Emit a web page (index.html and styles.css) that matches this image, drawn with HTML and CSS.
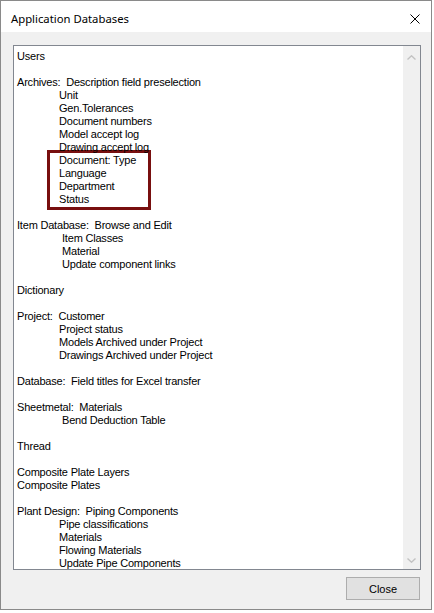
FILE: index.html
```html
<!DOCTYPE html>
<html lang="en">
<head>
    <meta charset="UTF-8">
    <title>Application Databases</title>
    <link rel="stylesheet" href="styles.css">
</head>
<body>
    <div class="window">
        <!-- Title bar -->
        <div class="titlebar">
            <span class="title">Application Databases</span>
            <svg class="close-x" width="10" height="10" viewBox="0 0 10 10">
                <path d="M0.5 0.5 L9.5 9.5 M9.5 0.5 L0.5 9.5" stroke="#000" stroke-width="1" fill="none"/>
            </svg>
        </div>

        <!-- Dialog body -->
        <div class="dialog-body">
            <div class="listbox">
                <div class="lines">
                    <div class="line">Users</div>
                    <div class="line"></div>
                    <div class="line">Archives:&nbsp; Description field preselection</div>
                    <div class="line sub">Unit</div>
                    <div class="line sub">Gen.Tolerances</div>
                    <div class="line sub">Document numbers</div>
                    <div class="line sub">Model accept log</div>
                    <div class="line sub">Drawing accept log</div>
                    <div class="highlight">
                        <div class="line">Document: Type</div>
                        <div class="line">Language</div>
                        <div class="line">Department</div>
                        <div class="line">Status</div>
                    </div>
                    <div class="line"></div>
                    <div class="line">Item Database:&nbsp; Browse and Edit</div>
                    <div class="line sub2">Item Classes</div>
                    <div class="line sub2">Material</div>
                    <div class="line sub2">Update component links</div>
                    <div class="line"></div>
                    <div class="line">Dictionary</div>
                    <div class="line"></div>
                    <div class="line">Project:&nbsp; Customer</div>
                    <div class="line sub">Project status</div>
                    <div class="line sub">Models Archived under Project</div>
                    <div class="line sub">Drawings Archived under Project</div>
                    <div class="line"></div>
                    <div class="line">Database:&nbsp; Field titles for Excel transfer</div>
                    <div class="line"></div>
                    <div class="line">Sheetmetal:&nbsp; Materials</div>
                    <div class="line sub2">Bend Deduction Table</div>
                    <div class="line"></div>
                    <div class="line">Thread</div>
                    <div class="line"></div>
                    <div class="line">Composite Plate Layers</div>
                    <div class="line">Composite Plates</div>
                    <div class="line"></div>
                    <div class="line">Plant Design:&nbsp; Piping Components</div>
                    <div class="line sub">Pipe classifications</div>
                    <div class="line sub">Materials</div>
                    <div class="line sub">Flowing Materials</div>
                    <div class="line sub">Update Pipe Components</div>
                </div>
                <!-- Scrollbar (disabled) -->
                <div class="scrollbar">
                    <svg width="9" height="5" viewBox="0 0 9 5">
                        <path d="M0.5 4.5 L4.5 0.8 L8.5 4.5" stroke="#c2c2c2" stroke-width="1.4" fill="none"/>
                    </svg>
                    <svg width="9" height="5" viewBox="0 0 9 5">
                        <path d="M0.5 0.5 L4.5 4.2 L8.5 0.5" stroke="#c2c2c2" stroke-width="1.4" fill="none"/>
                    </svg>
                </div>
            </div>
            <div class="buttons">
                <button class="btn">Close</button>
            </div>
        </div>
    </div>
</body>
</html>
```

FILE: styles.css
```css
body {
    margin: 0;
    padding: 0;
    background-color: #ffffff;
    font-family: "Liberation Sans", Arial, sans-serif;
}

/* Dialog frame */
.window {
    width: 432px;
    height: 610px;
    box-sizing: border-box;
    border: 1px solid #8a8a8a;
    background-color: #f0f0f0;
    display: flex;
    flex-direction: column;
}

.titlebar {
    height: 32px;
    box-sizing: border-box;
    background-color: #ffffff;
    display: flex;
    align-items: center;
    justify-content: space-between;
    padding: 4px 11px 0 10px;
}

.title {
    font-family: "Noto Sans", "Open Sans", sans-serif;
    font-size: 11.3px;
    color: #000000;
}

.close-x {
    display: block;
}

.dialog-body {
    flex: 1;
    display: flex;
    flex-direction: column;
    padding: 13px 10px 9px 12px;
}

/* List box */
.listbox {
    height: 525px;
    box-sizing: border-box;
    border: 1px solid #828790;
    background-color: #ffffff;
    display: flex;
    overflow: hidden;
}

.lines {
    flex: 1;
    padding: 4px 3px 0;
    font-size: 11px;
    line-height: 13px;
    letter-spacing: -0.2px;
    color: #000000;
}

.line {
    height: 13px;
    white-space: nowrap;
}

.sub {
    padding-left: 42px;
}

.sub2 {
    padding-left: 45px;
}

.highlight {
    width: 89px;
    margin: -4px 0 -4px 30px;
    padding: 1px 0 1px 9px;
    border: 3px solid #780f0f;
}

.scrollbar {
    width: 17px;
    background-color: #f0f0f0;
    display: flex;
    flex-direction: column;
    justify-content: space-between;
    align-items: center;
    padding: 9px 0 6px;
    box-sizing: border-box;
}

.scrollbar svg {
    display: block;
}

/* Buttons */
.buttons {
    display: flex;
    justify-content: flex-end;
    margin-top: 7px;
}

.btn {
    width: 74px;
    height: 23px;
    margin-right: 1px;
    background-color: #e1e1e1;
    border: 1px solid #adadad;
    font-family: "Liberation Sans", Arial, sans-serif;
    font-size: 11px;
    color: #000000;
    padding: 0;
}
```
